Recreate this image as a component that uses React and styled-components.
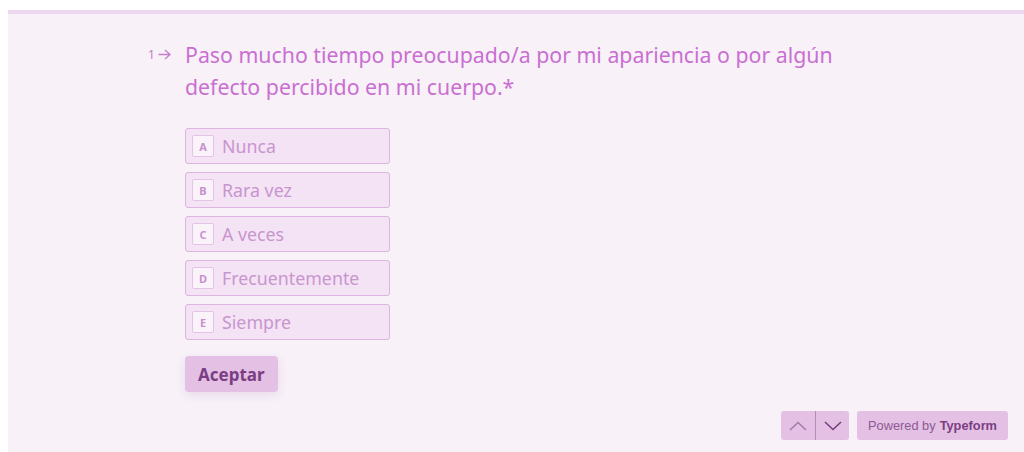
import React, { useState } from 'react';
import styled, { createGlobalStyle } from 'styled-components';

const GlobalStyle = createGlobalStyle`
    html, body {
        margin: 0;
        padding: 0;
        background: #ffffff;
    }
    body {
        padding: 10px 0 0 8px;
        font-family: "Noto Sans", "Open Sans", sans-serif;
    }
`;

// whole form panel
const Panel = styled.div`
    height: 442px;
    background: #f8f1f8;
    border-top: 4px solid #ecd7ee;
    box-sizing: border-box;
    display: flex;
    flex-direction: column;
`;

const Question = styled.div`
    display: flex;
    padding: 25px 0 0 140px;
`;

const Counter = styled.div`
    width: 37px;
    flex-shrink: 0;
    display: flex;
    align-items: center;
    gap: 3px;
    height: 30px;
    color: #c77ccd;
    font-size: 12px;
`;

const Body = styled.div`
    display: flex;
    flex-direction: column;
`;

const Title = styled.h1`
    margin: 0;
    width: 680px;
    font-size: 21.3px;
    font-weight: 400;
    line-height: 32px;
    color: #c96fd1;
`;

const Choices = styled.div`
    margin-top: 25px;
    display: flex;
    flex-direction: column;
    gap: 8px;
`;

const Choice = styled.button`
    width: 205px;
    height: 36px;
    box-sizing: border-box;
    display: flex;
    align-items: center;
    gap: 8px;
    padding: 0 6px;
    border: 1px solid ${p => (p.$active ? '#c96fd1' : '#dfb3e2')};
    border-radius: 3px;
    background: #f3e3f4;
    cursor: pointer;
    font-family: inherit;
    font-size: 17.8px;
    color: #c995cf;
    text-align: left;
`;

const Key = styled.span`
    width: 22px;
    height: 22px;
    box-sizing: border-box;
    display: flex;
    align-items: center;
    justify-content: center;
    border: 1px solid #e4c3e6;
    border-radius: 2px;
    background: #faf4fa;
    font-size: 11px;
    font-weight: 700;
    color: #c98fcf;
`;

const Submit = styled.button`
    margin-top: 16px;
    align-self: flex-start;
    height: 36px;
    padding: 0 13px;
    border: none;
    border-radius: 4px;
    background: #e3c0e4;
    box-shadow: 0 3px 10px rgba(120, 60, 130, 0.12);
    font-family: inherit;
    font-size: 17px;
    font-weight: 700;
    color: #7b3e82;
    cursor: pointer;
`;

const Footer = styled.div`
    margin-top: auto;
    display: flex;
    justify-content: flex-end;
    gap: 8px;
    padding: 0 16px 12px 0;
`;

const NavGroup = styled.div`
    display: flex;
    height: 29px;
    border-radius: 3px;
    overflow: hidden;
    background: #e3c0e4;
`;

const NavButton = styled.button`
    width: 34px;
    height: 29px;
    border: none;
    border-left: ${p => (p.$split ? '1px solid #b98abd' : 'none')};
    background: transparent;
    display: flex;
    align-items: center;
    justify-content: center;
    padding: 0;
    cursor: pointer;
`;

const Brand = styled.a`
    height: 29px;
    padding: 0 11px;
    display: flex;
    align-items: center;
    gap: 4px;
    border-radius: 3px;
    background: #e3c0e4;
    font-family: "Liberation Sans", Arial, sans-serif;
    font-size: 12.8px;
    color: #8d5a92;
    text-decoration: none;
    b {
        color: #7b3e82;
    }
`;

const options = ['Nunca', 'Rara vez', 'A veces', 'Frecuentemente', 'Siempre'];
const letters = ['A', 'B', 'C', 'D', 'E'];

const Chevron = ({ up, color }) => (
    <svg width="18" height="10" viewBox="0 0 18 10" fill="none">
        <path d={up ? 'M1 9 L9 1.5 L17 9' : 'M1 1 L9 8.5 L17 1'} stroke={color} strokeWidth="1.6" />
    </svg>
);

const App = () => {
    const [picked, setPicked] = useState(null);

    return (
        <>
            <GlobalStyle />
            <Panel>
                <Question>
                    <Counter>
                        <span>1</span>
                        <svg width="13" height="11" viewBox="0 0 13 11" fill="none">
                            <path d="M0.5 5.5 H12 M7 1 L12 5.5 L7 10" stroke="#c77ccd" strokeWidth="1.3" />
                        </svg>
                    </Counter>
                    <Body>
                        <Title>Paso mucho tiempo preocupado/a por mi apariencia o por algún defecto percibido en mi cuerpo.*</Title>
                        <Choices>
                            {options.map((o, i) => (
                                <Choice key={o} $active={picked === i} onClick={() => setPicked(i)}>
                                    <Key>{letters[i]}</Key>
                                    {o}
                                </Choice>
                            ))}
                        </Choices>
                        <Submit>Aceptar</Submit>
                    </Body>
                </Question>
                <Footer>
                    <NavGroup>
                        <NavButton><Chevron up color="#a77aab" /></NavButton>
                        <NavButton $split><Chevron color="#7b3e82" /></NavButton>
                    </NavGroup>
                    <Brand href="#">Powered by <b>Typeform</b></Brand>
                </Footer>
            </Panel>
        </>
    );
};

export default App;
